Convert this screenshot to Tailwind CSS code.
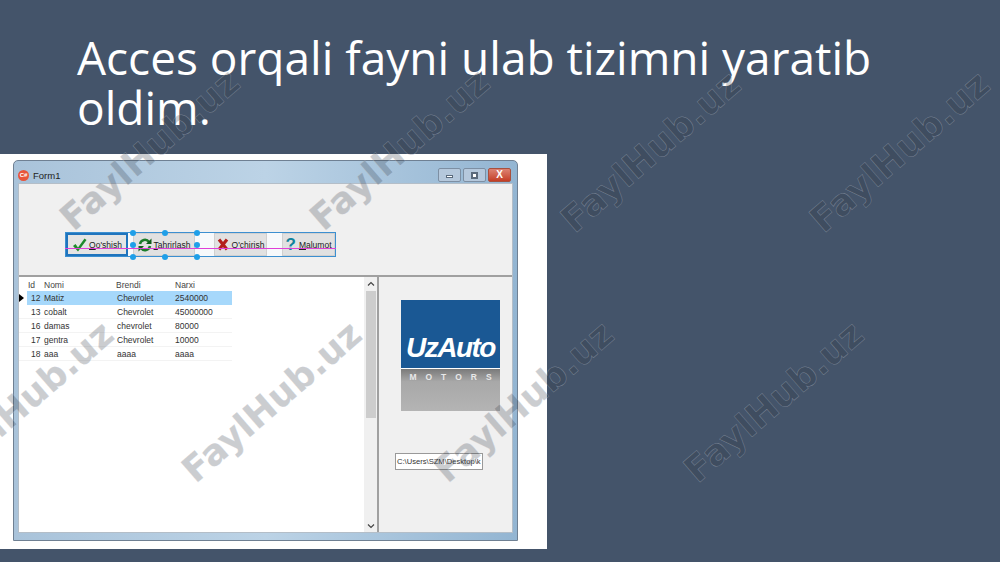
<!DOCTYPE html>
<html lang="en">
<head>
    <meta charset="UTF-8">
    <title>Acces orqali fayni ulab tizimni yaratib oldim.</title>
    <script src="https://cdn.jsdelivr.net/npm/@tailwindcss/browser@4"></script>
</head>
<body class="bg-[#44546a] w-[1000px] h-[562px] overflow-hidden relative font-['Open_Sans',sans-serif]">
    <!-- Slide title -->
    <h1 class="h-[154px] pl-[77px] pt-[32px] text-white text-[46px] leading-[50px] font-normal w-[900px]">Acces orqali fayni ulab tizimni yaratib oldim.</h1>

    <!-- Screenshot of the form -->
    <div class="w-[547px] h-[395px] bg-white pl-[13px] pt-[6px] font-['Liberation_Sans',sans-serif]">
        <div class="w-[505px] h-[381px] rounded-t-[5px] border border-[#6f8093] bg-gradient-to-r from-[#a9c3da] via-[#bcd3e6] to-[#93b5d2] px-[4px] pb-[7px] flex flex-col">
            <!-- Title bar -->
            <div class="h-[22px] flex items-end pb-[1px] shrink-0">
                <div class="w-[11px] h-[11px] mb-[1px] rounded-full bg-[#e8563a] flex items-center justify-center text-white text-[6px] font-bold">C#</div>
                <span class="ml-[4px] text-[9.500px] leading-[13px] text-[#222]">Form1</span>
                <div class="ml-auto mr-[2px] flex gap-[2px]">
                    <div class="w-[23px] h-[14px] rounded-[2px] border border-[#7d8fa3] bg-[#b5c8dc] flex items-center justify-center pt-[2px]"><div class="w-[7px] h-[3px] bg-white border border-[#5a6a7c]"></div></div>
                    <div class="w-[23px] h-[14px] rounded-[2px] border border-[#7d8fa3] bg-[#b5c8dc] flex items-center justify-center"><div class="w-[7px] h-[7px] bg-white border-2 border-[#5a6a7c]"></div></div>
                    <div class="w-[23px] h-[14px] rounded-[2px] border border-[#a8503e] bg-gradient-to-b from-[#dc8272] to-[#c43c24] flex items-center justify-center text-white text-[10px] leading-none font-bold">X</div>
                </div>
            </div>
            <!-- Client area -->
            <div class="flex-1 bg-[#f0f0f0] border border-[#b4bec8] flex flex-col min-h-0">
                <!-- Toolbar panel -->
                <div class="h-[93px] shrink-0 border-b-2 border-[#a0a0a0] pl-[46px] pt-[48px] relative text-[8.500px] text-[#222]">
                    <div class="flex h-[25px] w-[271px] border border-[#3c8fd0] bg-[#f7f9fb]">
                        <div class="w-[62px] border-2 border-[#1f74bd] bg-[#e4e4e4] flex items-center justify-center gap-[2px]">
                            <svg width="15" height="14" viewBox="0 0 15 14"><path d="M1 8l2.500-2 2.500 3.500L12.500 0.500 14.500 2 6 13.500z" fill="#1f8a2c"/></svg>
                            <span class="pt-[2px]"><u>Q</u>o'shish</span>
                        </div>
                        <div class="w-[62px] ml-[5px] bg-[#e1e1e1] border border-[#d0d0d0] flex items-center justify-center gap-[2px]">
                            <svg width="14" height="14" viewBox="0 0 14 14" fill="none" stroke="#1c7d2a" stroke-width="2.500"><path d="M2 6a5 5 0 0 1 9-2"/><path d="M12 8a5 5 0 0 1-9 2"/><path d="M13.500 0.500v5.500H8z" fill="#0e5f1a" stroke="none"/><path d="M0.500 13.500V8H6z" fill="#0e5f1a" stroke="none"/></svg>
                            <span class="pt-[2px]"><u>T</u>ahrirlash</span>
                        </div>
                        <div class="w-[53px] ml-[19px] bg-[#e1e1e1] border border-[#d0d0d0] flex items-center justify-center gap-[3px]">
                            <svg width="12" height="13" viewBox="0 0 12 13" fill="none" stroke="#b3201c" stroke-width="3.200"><path d="M2 1.500l8 10M10 1.500l-8 10"/></svg>
                            <span class="pt-[2px]">O'chirish</span>
                        </div>
                        <div class="w-[53px] ml-[15px] bg-[#e1e1e1] border border-[#d0d0d0] flex items-center justify-center gap-[3px]">
                            <span class="text-[17px] leading-none font-bold text-[#12839c]">?</span>
                            <span class="pt-[2px]"><u>M</u>alumot</span>
                        </div>
                    </div>
                    <!-- Designer overlays -->
                    <div class="absolute left-[46px] top-[64px] w-[271px] h-px bg-[#e040d8]"></div>
                    <div class="absolute left-[111px] top-[46px] w-[69px] h-[28px]">
                        <div class="absolute left-0 top-0 w-[6px] h-[6px] rounded-full bg-[#1f9fe8]"></div>
                        <div class="absolute left-[32px] top-0 w-[6px] h-[6px] rounded-full bg-[#1f9fe8]"></div>
                        <div class="absolute left-[64px] top-0 w-[6px] h-[6px] rounded-full bg-[#1f9fe8]"></div>
                        <div class="absolute left-0 top-[12px] w-[6px] h-[6px] rounded-full bg-[#1f9fe8]"></div>
                        <div class="absolute left-[64px] top-[12px] w-[6px] h-[6px] rounded-full bg-[#1f9fe8]"></div>
                        <div class="absolute left-0 top-[24px] w-[6px] h-[6px] rounded-full bg-[#1f9fe8]"></div>
                        <div class="absolute left-[32px] top-[24px] w-[6px] h-[6px] rounded-full bg-[#1f9fe8]"></div>
                        <div class="absolute left-[64px] top-[24px] w-[6px] h-[6px] rounded-full bg-[#1f9fe8]"></div>
                    </div>
                </div>
                <!-- Lower split -->
                <div class="flex-1 flex min-h-0">
                    <!-- Data grid -->
                    <div class="w-[360px] bg-white border-r-2 border-[#a0a0a0] flex pt-[1px] text-[8.500px] leading-[14px] text-[#333]">
                        <div class="w-[345px]">
                            <div class="grid grid-cols-[8px_16px_72px_59px_58px] w-[213px] h-[13px] text-[#444]">
                                <div></div><div class="pl-[1px]">Id</div><div class="pl-[1px]">Nomi</div><div class="pl-[1px]">Brendi</div><div class="pl-[1px]">Narxi</div>
                            </div>
                            <div class="grid grid-cols-[8px_16px_72px_59px_58px] w-[213px] h-[14px]">
                                <div class="flex items-center"><div class="w-0 h-0 border-y-[4px] border-y-transparent border-l-[5px] border-l-black"></div></div>
                                <div class="bg-[#a6d8fb] pl-[4px]">12</div><div class="bg-[#a6d8fb] pl-[1px]">Matiz</div><div class="bg-[#a6d8fb] pl-[2px]">Chevrolet</div><div class="bg-[#a6d8fb] pl-[1px]">2540000</div>
                            </div>
                            <div class="grid grid-cols-[8px_16px_72px_59px_58px] w-[213px] h-[14px] border-b border-[#f3f3f3]">
                                <div></div><div class="pl-[4px]">13</div><div class="pl-[1px]">cobalt</div><div class="pl-[2px]">Chevrolet</div><div class="pl-[1px]">45000000</div>
                            </div>
                            <div class="grid grid-cols-[8px_16px_72px_59px_58px] w-[213px] h-[14px] border-b border-[#f3f3f3]">
                                <div></div><div class="pl-[4px]">16</div><div class="pl-[1px]">damas</div><div class="pl-[2px]">chevrolet</div><div class="pl-[1px]">80000</div>
                            </div>
                            <div class="grid grid-cols-[8px_16px_72px_59px_58px] w-[213px] h-[14px] border-b border-[#f3f3f3]">
                                <div></div><div class="pl-[4px]">17</div><div class="pl-[1px]">gentra</div><div class="pl-[2px]">Chevrolet</div><div class="pl-[1px]">10000</div>
                            </div>
                            <div class="grid grid-cols-[8px_16px_72px_59px_58px] w-[213px] h-[14px] border-b border-[#f3f3f3]">
                                <div></div><div class="pl-[4px]">18</div><div class="pl-[1px]">aaa</div><div class="pl-[2px]">aaaa</div><div class="pl-[1px]">aaaa</div>
                            </div>
                        </div>
                        <!-- Scrollbar -->
                        <div class="w-[13px] -mt-[1px] bg-[#f0f0f0] flex flex-col items-center text-[#444]">
                            <svg class="h-[14px] shrink-0" width="8" height="14" viewBox="0 0 8 14" fill="none" stroke="#444" stroke-width="1.200"><path d="M1 8.500l3-3 3 3"/></svg>
                            <div class="w-[10px] h-[127px] bg-[#cdcdcd]"></div>
                            <svg class="mt-auto h-[12px] shrink-0" width="8" height="12" viewBox="0 0 8 12" fill="none" stroke="#444" stroke-width="1.200"><path d="M1 4.500l3 3 3-3"/></svg>
                        </div>
                    </div>
                    <!-- Logo panel -->
                    <div class="flex-1 pl-[22px] pt-[23px]">
                        <div class="w-[99px] h-[111px] flex flex-col">
                            <div class="h-[68px] bg-[#1a5894] flex items-end justify-center pb-[2px]">
                                <span class="text-white text-[28px] leading-[36px] font-bold italic tracking-[-1.500px]">UzAuto</span>
                            </div>
                            <div class="h-px bg-white"></div>
                            <div class="flex-1 bg-gradient-to-b from-[#7a7a7a] via-[#a8a8a8] via-30% to-[#b4b4b4] flex justify-center pt-[3px]">
                                <span class="text-[#e8e8e8] text-[8.500px] leading-[10px] font-bold tracking-[9px] pl-[9px]">MOTORS</span>
                            </div>
                        </div>
                        <div class="w-[88px] h-[17px] mt-[42px] -ml-[6px] bg-white border border-[#999] pl-[1px] text-[7.600px] leading-[15px] text-[#333] overflow-hidden whitespace-nowrap">C:\Users\SZM\Desktop\k</div>
                    </div>
                </div>
            </div>
        </div>
    </div>

    <!-- FaylHub.uz watermarks -->
    <div class="absolute left-[150px] top-[150px] -translate-x-1/2 -translate-y-1/2 -rotate-[41deg] text-[36px] font-bold whitespace-nowrap text-[#303844]/25 [-webkit-text-stroke:0.5px_rgba(200,205,215,0.4)] font-['DejaVu_Sans',sans-serif]">FaylHub.uz</div>
    <div class="absolute left-[400px] top-[150px] -translate-x-1/2 -translate-y-1/2 -rotate-[41deg] text-[36px] font-bold whitespace-nowrap text-[#303844]/25 [-webkit-text-stroke:0.5px_rgba(200,205,215,0.4)] font-['DejaVu_Sans',sans-serif]">FaylHub.uz</div>
    <div class="absolute left-[651px] top-[152px] -translate-x-1/2 -translate-y-1/2 -rotate-[41deg] text-[36px] font-bold whitespace-nowrap text-[#303844]/25 [-webkit-text-stroke:0.5px_rgba(200,205,215,0.4)] font-['DejaVu_Sans',sans-serif]">FaylHub.uz</div>
    <div class="absolute left-[900px] top-[152px] -translate-x-1/2 -translate-y-1/2 -rotate-[41deg] text-[36px] font-bold whitespace-nowrap text-[#303844]/25 [-webkit-text-stroke:0.5px_rgba(200,205,215,0.4)] font-['DejaVu_Sans',sans-serif]">FaylHub.uz</div>
    <div class="absolute left-[24px] top-[402px] -translate-x-1/2 -translate-y-1/2 -rotate-[41deg] text-[36px] font-bold whitespace-nowrap text-[#303844]/25 [-webkit-text-stroke:0.5px_rgba(200,205,215,0.4)] font-['DejaVu_Sans',sans-serif]">FaylHub.uz</div>
    <div class="absolute left-[272px] top-[402px] -translate-x-1/2 -translate-y-1/2 -rotate-[41deg] text-[36px] font-bold whitespace-nowrap text-[#303844]/25 [-webkit-text-stroke:0.5px_rgba(200,205,215,0.4)] font-['DejaVu_Sans',sans-serif]">FaylHub.uz</div>
    <div class="absolute left-[524px] top-[402px] -translate-x-1/2 -translate-y-1/2 -rotate-[41deg] text-[36px] font-bold whitespace-nowrap text-[#303844]/25 [-webkit-text-stroke:0.5px_rgba(200,205,215,0.4)] font-['DejaVu_Sans',sans-serif]">FaylHub.uz</div>
    <div class="absolute left-[774px] top-[402px] -translate-x-1/2 -translate-y-1/2 -rotate-[41deg] text-[36px] font-bold whitespace-nowrap text-[#303844]/25 [-webkit-text-stroke:0.5px_rgba(200,205,215,0.4)] font-['DejaVu_Sans',sans-serif]">FaylHub.uz</div>
</body>
</html>
